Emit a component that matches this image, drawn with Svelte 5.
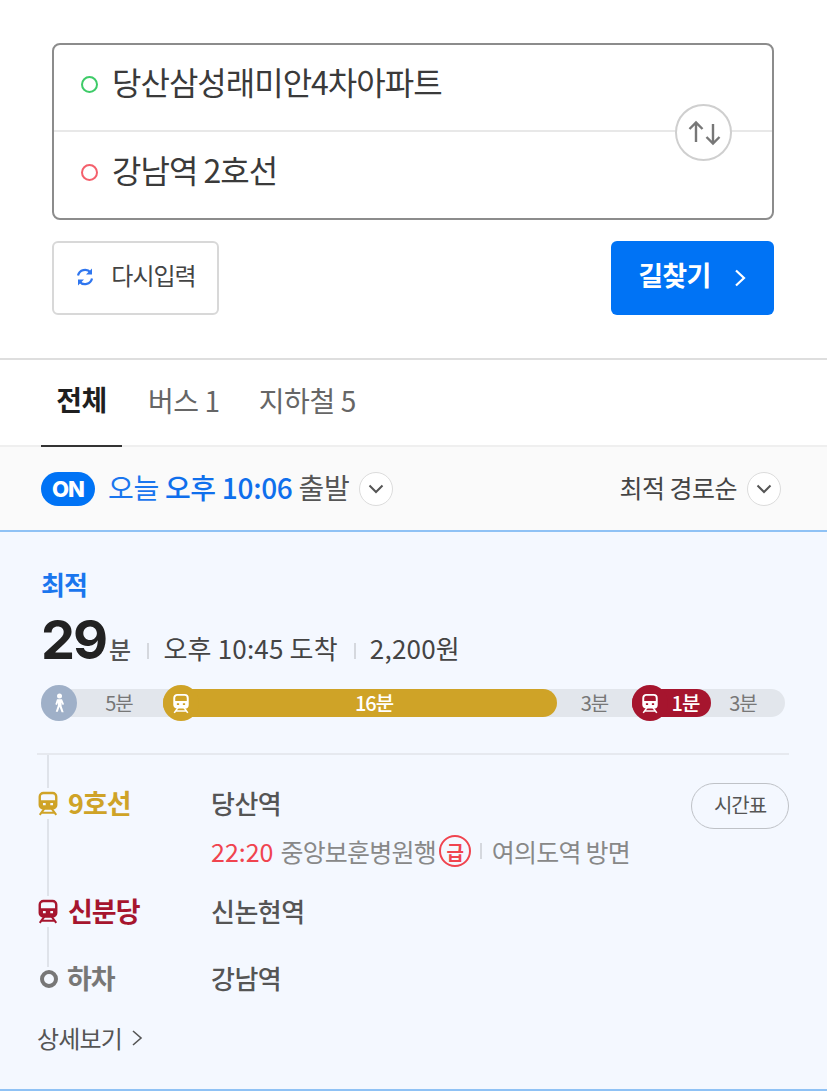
<script>
  const segments = [
    { type: 'walk', label: '5분', width: 122 },
    { type: 'line', label: '16분', width: 394, color: '#cfa327' },
    { type: 'gap', label: '3분', width: 75 },
    { type: 'line', label: '1분', width: 79, color: '#a6152e' },
    { type: 'gap', label: '3분', width: 74 }
  ];
</script>

{#snippet train(color, width, height)}
  <svg class="train" {width} {height} viewBox="0 0 24 27" fill="none">
    <rect x="3" y="2" width="18" height="17" rx="4" stroke={color} stroke-width="2.600" />
    <path fill-rule="evenodd" d="M3 10h18v6a3 3 0 0 1-3 3H6a3 3 0 0 1-3-3zM6.500 13v2.500h3V13zM14.500 13v2.500h3V13z" fill={color} />
    <path d="M8 19 3 26M16 19l5 7M5 23.500h14" stroke={color} stroke-width="2.200" />
  </svg>
{/snippet}

{#snippet chevronDown()}
  <span class="round-toggle">
    <svg width="16" height="10" viewBox="0 0 16 10" fill="none"><path d="M1.500 1.500 8 8l6.500-6.500" stroke="#555" stroke-width="2" /></svg>
  </span>
{/snippet}

<div class="page">
  <section class="search">
    <div class="route-box">
      <div class="place">
        <span class="dot start"></span>
        <span class="place-name">당산삼성래미안4차아파트</span>
      </div>
      <div class="place second">
        <span class="dot end"></span>
        <span class="place-name">강남역 2호선</span>
      </div>
      <button class="swap" aria-label="swap">
        <svg width="36" height="26" viewBox="0 0 36 26" fill="none">
          <path d="M10 22V2.500M3.500 9 10 2.500 16.500 9" stroke="#777" stroke-width="2.400" />
          <path d="M27 4v19.500M20.500 17l6.500 6.500 6.500-6.500" stroke="#777" stroke-width="2.400" />
        </svg>
      </button>
    </div>
    <div class="actions">
      <button class="reset">
        <svg width="20" height="20" viewBox="0 0 20 20" fill="none">
          <path d="M3 8.500A7.200 7.200 0 0 1 15.600 5.500" stroke="#2f76ef" stroke-width="2.200" />
          <path d="M17.500 2v6h-6z" fill="#2f76ef" transform="translate(-.5 -.5)" />
          <path d="M17 11.500A7.200 7.200 0 0 1 4.400 14.500" stroke="#2f76ef" stroke-width="2.200" />
          <path d="M2.500 18v-6h6z" fill="#2f76ef" transform="translate(.5 .5)" />
        </svg>
        <span class="btn-text">다시입력</span>
      </button>
      <button class="go">
        <span class="btn-text">길찾기</span>
        <svg width="14" height="20" viewBox="0 0 14 20" fill="none"><path d="M3 2.500 11 10l-8 7.500" stroke="#fff" stroke-width="2.200" /></svg>
      </button>
    </div>
  </section>

  <nav class="tabs">
    <span class="tab active"><span>전체</span></span>
    <span class="tab"><span>버스 1</span></span>
    <span class="tab"><span>지하철 5</span></span>
  </nav>

  <div class="filter">
    <span class="on">ON</span>
    <span class="when"><em>오늘</em> <b>오후 10:06</b> 출발</span>
    {@render chevronDown()}
    <span class="sort">최적 경로순</span>
    {@render chevronDown()}
  </div>

  <article class="card">
    <div class="best">최적</div>
    <div class="summary">
      <span class="mins">29</span><span class="unit">분</span>
      <span class="sep"></span>
      <span>오후 10:45 도착</span>
      <span class="sep"></span>
      <span>2,200원</span>
    </div>

    <div class="bar">
      {#each segments as seg}
        <div class="seg {seg.type}" style="width: {seg.width}px; background: {seg.color ?? 'transparent'}">
          {#if seg.type === 'walk'}
            <span class="badge" style="background: #9fb0c8">
              <svg width="15" height="20" viewBox="0 0 18 24" fill="#fff">
                <circle cx="9" cy="3.500" r="3" />
                <path d="M6 7.500h6l2.500 6-1.800.8-1.200-2.800v4l2.500 7.500h-2.500L9 16.500 7 22.500H4.500L7 15v-3.500l-1.200 2.800-1.800-.8z" />
              </svg>
            </span>
          {:else if seg.type === 'line'}
            <span class="badge" style="background: {seg.color}">
              {@render train('#fff', 18, 21)}
            </span>
          {/if}
          <span class="seg-label">{seg.label}</span>
        </div>
      {/each}
    </div>

    <div class="steps">
      <span class="rail"></span>
      <div class="step first">
        <div class="step-line" style="color: #cfa327">{@render train('#cfa327', 22, 25)}9호선</div>
        <div class="step-body">
          <div class="station">당산역</div>
          <div class="next">
            <span class="time">22:20</span> 중앙보훈병원행
            <span class="express">급</span>
            <span class="sep"></span>
            여의도역 방면
          </div>
        </div>
        <button class="timetable">시간표</button>
      </div>
      <div class="step">
        <div class="step-line" style="color: #a6152e">{@render train('#a6152e', 22, 25)}신분당</div>
        <div class="step-body"><div class="station">신논현역</div></div>
      </div>
      <div class="step">
        <div class="step-line off"><span class="ring"></span>하차</div>
        <div class="step-body"><div class="station">강남역</div></div>
      </div>
    </div>

    <div class="more">
      상세보기
      <svg width="12" height="18" viewBox="0 0 12 18" fill="none"><path d="M2 2l8 7-8 7" stroke="#555" stroke-width="1.600" /></svg>
    </div>
  </article>
</div>

<style>
  :global(body) {
    margin: 0;
    background: #fff;
  }

  .page {
    width: 827px;
    height: 1091px;
    overflow: hidden;
    font-family: "Noto Sans CJK KR", "Noto Sans", sans-serif;
    color: #333;
  }

  button {
    font-family: inherit;
    cursor: pointer;
  }

  .search {
    height: 272px;
    padding: 43px 53px 43px 52px;
    border-bottom: 2px solid #dedede;
  }

  .route-box {
    position: relative;
    height: 173px;
    border: 2px solid #8c8c8c;
    border-radius: 8px;
  }

  .place {
    height: 85px;
    box-sizing: border-box;
    display: flex;
    align-items: center;
    gap: 14px;
    padding: 0 0 6px 27px;
    font-size: 32px;
    letter-spacing: -1px;
    color: #3a3a3a;
  }

  .place.second {
    height: 88px;
    border-top: 2px solid #e8e8e8;
  }

  .place-name {
    margin-bottom: 7px;
  }

  .dot {
    width: 13px;
    height: 13px;
    border: 2px solid;
    border-radius: 50%;
    flex: none;
  }

  .dot.start {
    border-color: #3ecb68;
  }

  .dot.end {
    border-color: #f4606c;
  }

  .swap {
    position: absolute;
    top: 59px;
    right: 40px;
    width: 57px;
    height: 57px;
    padding: 0;
    display: flex;
    align-items: center;
    justify-content: center;
    background: #fff;
    border: 2px solid #cfcfcf;
    border-radius: 50%;
  }

  .actions {
    display: flex;
    justify-content: space-between;
    margin-top: 21px;
  }

  .btn-text {
    margin-bottom: 7px;
  }

  .reset {
    width: 167px;
    height: 74px;
    display: flex;
    align-items: center;
    justify-content: center;
    gap: 16px;
    padding: 0;
    background: #fff;
    border: 2px solid #d8d8d8;
    border-radius: 6px;
    font-size: 24px;
    letter-spacing: -1px;
    color: #444;
  }

  .reset svg {
    margin-bottom: 3px;
  }

  .go {
    width: 163px;
    height: 74px;
    display: flex;
    align-items: center;
    justify-content: center;
    gap: 22px;
    padding: 0;
    background: #0073f5;
    border: none;
    border-radius: 6px;
    font-size: 27px;
    font-weight: 700;
    letter-spacing: -0.600px;
    color: #fff;
  }

  .tabs {
    height: 85px;
    display: flex;
    padding-left: 41px;
    border-bottom: 2px solid #efefef;
  }

  .tab {
    height: 87px;
    box-sizing: border-box;
    display: flex;
    align-items: center;
    font-size: 28px;
    letter-spacing: -0.400px;
    color: #666;
    margin-right: 39px;
  }

  .tab span {
    margin-bottom: 8px;
  }

  .tab.active {
    width: 81px;
    justify-content: center;
    margin-right: 26px;
    font-weight: 700;
    color: #1f1f1f;
    border-bottom: 2px solid #333;
  }

  .filter {
    height: 83px;
    display: flex;
    align-items: center;
    padding: 0 46px 0 41px;
    background: #fafafa;
    border-bottom: 2px solid #8fc2f5;
  }

  .on {
    width: 54px;
    height: 34px;
    display: flex;
    align-items: center;
    justify-content: center;
    border-radius: 17px;
    background: #0073f5;
    color: #fff;
    font-family: "Inter", sans-serif;
    font-size: 22px;
    font-weight: 800;
    letter-spacing: -1px;
  }

  .when {
    margin: 0 10px 4px 13px;
    font-size: 28px;
    letter-spacing: -0.300px;
    color: #555;
  }

  .when em {
    font-style: normal;
    color: #1a76ee;
  }

  .when b {
    font-weight: 500;
    color: #0f6fec;
  }

  .round-toggle {
    width: 34px;
    height: 34px;
    flex: none;
    box-sizing: border-box;
    display: flex;
    align-items: center;
    justify-content: center;
    background: #fff;
    border: 1.500px solid #dcdcdc;
    border-radius: 50%;
  }

  .sort {
    margin: 0 10px 4px auto;
    font-size: 25px;
    letter-spacing: -0.500px;
    color: #444;
  }

  .card {
    height: 557px;
    padding: 0 38px 0 41px;
    background: #f4f8ff;
    border-bottom: 2px solid #8fc2f5;
  }

  .best {
    padding-top: 34px;
    font-size: 26px;
    line-height: 36px;
    font-weight: 700;
    letter-spacing: -1px;
    color: #1a76ee;
  }

  .summary {
    display: flex;
    align-items: baseline;
    margin-top: 9px;
    height: 58px;
    font-size: 26px;
    letter-spacing: 0.200px;
    color: #444;
  }

  .mins {
    font-family: "Inter", sans-serif;
    font-size: 54px;
    font-weight: 700;
    letter-spacing: -2px;
    color: #222;
    line-height: 58px;
  }

  .unit {
    font-size: 24px;
    font-weight: 500;
    color: #555;
    margin-left: 3px;
  }

  .sep {
    display: inline-block;
    width: 2px;
    height: 16px;
    background: #d5d8de;
    margin: 0 14px 0 16px;
  }

  .bar {
    display: flex;
    width: 744px;
    height: 28px;
    margin-top: 20px;
    border-radius: 14px;
    background: #e2e6ec;
  }

  .seg {
    position: relative;
    display: flex;
    align-items: center;
    justify-content: center;
    border-radius: 14px;
    font-size: 20px;
    letter-spacing: -1px;
    color: #777;
  }

  .seg-label {
    margin-bottom: 2px;
  }

  .seg.line {
    color: #fff;
    font-weight: 500;
  }

  .seg.line .seg-label {
    padding-left: 28px;
  }

  .seg.walk .seg-label {
    padding-left: 34px;
  }

  .seg:last-child .seg-label {
    padding-right: 10px;
  }

  .badge {
    position: absolute;
    left: 0;
    top: -4px;
    width: 36px;
    height: 36px;
    display: flex;
    align-items: center;
    justify-content: center;
    border-radius: 50%;
  }

  .steps {
    position: relative;
    width: 752px;
    margin: 36px 0 0 -4px;
    padding-top: 25px;
    border-top: 2px solid #e6e9ef;
  }

  .rail {
    position: absolute;
    left: 10px;
    top: 0;
    width: 2px;
    height: 212px;
    background: #dfe3ea;
  }

  .step {
    position: relative;
    display: flex;
    min-height: 67px;
  }

  .step.first {
    min-height: 108px;
  }

  .step-line {
    width: 174px;
    flex: none;
    display: flex;
    align-items: center;
    gap: 9px;
    height: 44px;
    font-size: 27px;
    font-weight: 700;
    letter-spacing: -1px;
  }

  .step-line :global(svg) {
    flex: none;
    background: #f4f8ff;
    box-shadow: 0 0 0 3px #f4f8ff;
    margin-top: 3px;
  }

  .step-line.off {
    color: #777;
    gap: 9px;
    padding-left: 3px;
    box-sizing: border-box;
  }

  .ring {
    width: 18px;
    height: 18px;
    box-sizing: border-box;
    border: 4px solid #777;
    border-radius: 50%;
    background: #f4f8ff;
    box-shadow: 0 0 0 3px #f4f8ff;
    margin-top: 3px;
  }

  .step-body {
    flex: 1;
  }

  .station {
    height: 44px;
    line-height: 44px;
    padding-top: 1px;
    font-size: 26px;
    font-weight: 500;
    letter-spacing: -0.500px;
    color: #555;
  }

  .next {
    display: flex;
    align-items: center;
    height: 34px;
    margin-top: 9px;
    font-size: 25px;
    letter-spacing: -0.800px;
    color: #888;
  }

  .time {
    color: #f0444f;
    letter-spacing: 0;
    margin-right: 7px;
  }

  .express {
    width: 32px;
    height: 32px;
    box-sizing: border-box;
    margin-left: 3px;
    display: flex;
    align-items: center;
    justify-content: center;
    border: 2px solid #f0444f;
    border-radius: 50%;
    color: #f0444f;
    font-size: 19px;
    font-weight: 700;
  }

  .next .sep {
    margin: 0 10px 0 9px;
  }

  .timetable {
    position: absolute;
    right: 0;
    top: 3px;
    width: 98px;
    height: 46px;
    padding: 0 0 3px;
    background: transparent;
    border: 1.500px solid #bfc2c7;
    border-radius: 23px;
    font-size: 20px;
    letter-spacing: -1px;
    color: #555;
  }

  .more {
    display: flex;
    align-items: center;
    gap: 9px;
    margin: -2px 0 0 -4px;
    font-size: 24px;
    letter-spacing: -0.800px;
    color: #555;
  }
</style>
